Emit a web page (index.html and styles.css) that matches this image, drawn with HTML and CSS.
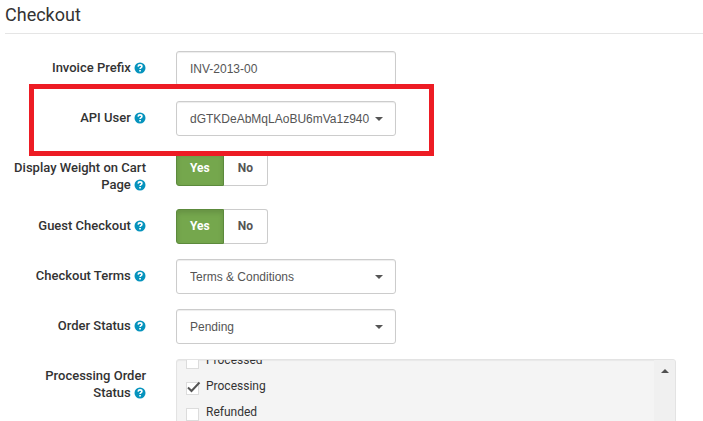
FILE: index.html
```html
<!DOCTYPE html>
<html lang="en">
<head>
  <meta charset="UTF-8">
  <meta name="viewport" content="width=device-width, initial-scale=1.0">
  <title>Checkout</title>
  <link rel="stylesheet" href="styles.css">
</head>
<body>
  <svg class="sprite" aria-hidden="true">
    <symbol id="help" viewBox="0 0 12 12">
      <circle cx="6" cy="6" r="5.5" fill="#0593bd"/>
      <path d="M4.1 4.6C4.2 3.4 5 2.9 6 2.9s1.9.6 1.9 1.6C7.9 5.700 6.100 5.700 6.100 7.100" fill="none" stroke="#fff" stroke-width="1.600"/>
      <path d="M5.200 7.900h1.700v1.500H5.200z" fill="#fff"/>
    </symbol>
  </svg>
  <form class="settings">
    <h1>Checkout</h1>

    <div class="form-group">
      <label class="control-label" for="invoice-prefix">Invoice Prefix <svg class="help"><use href="#help"/></svg></label>
      <input class="form-control" type="text" id="invoice-prefix" value="INV-2013-00">
    </div>

    <div class="form-group highlight">
      <label class="control-label" for="api-user">API User <svg class="help"><use href="#help"/></svg></label>
      <div class="select">
        <select class="form-control" id="api-user">
          <option>dGTKDeAbMqLAoBU6mVa1z940</option>
        </select>
      </div>
    </div>

    <div class="form-group" role="radiogroup" aria-labelledby="cart-weight">
      <span class="control-label" id="cart-weight">Display Weight on Cart Page <svg class="help"><use href="#help"/></svg></span>
      <div class="btn-group">
        <label class="btn"><input type="radio" name="cart-weight" value="1" checked>Yes</label>
        <label class="btn"><input type="radio" name="cart-weight" value="0">No</label>
      </div>
    </div>

    <div class="form-group" role="radiogroup" aria-labelledby="guest-checkout">
      <span class="control-label" id="guest-checkout">Guest Checkout <svg class="help"><use href="#help"/></svg></span>
      <div class="btn-group">
        <label class="btn"><input type="radio" name="guest-checkout" value="1" checked>Yes</label>
        <label class="btn"><input type="radio" name="guest-checkout" value="0">No</label>
      </div>
    </div>

    <div class="form-group">
      <label class="control-label" for="checkout-terms">Checkout Terms <svg class="help"><use href="#help"/></svg></label>
      <div class="select">
        <select class="form-control" id="checkout-terms">
          <option>Terms &amp; Conditions</option>
        </select>
      </div>
    </div>

    <div class="form-group">
      <label class="control-label" for="order-status">Order Status <svg class="help"><use href="#help"/></svg></label>
      <div class="select">
        <select class="form-control" id="order-status">
          <option>Pending</option>
        </select>
      </div>
    </div>

    <div class="form-group" role="group" aria-labelledby="processing-status">
      <span class="control-label" id="processing-status">Processing Order Status <svg class="help"><use href="#help"/></svg></span>
      <div class="well">
        <div class="checkbox-list">
          <label class="checkbox"><input type="checkbox">Processed</label>
          <label class="checkbox"><input type="checkbox" checked><svg class="tick" viewBox="0 0 14 12"><path d="M1 6.500L4.500 10L12.500 1.500" fill="none" stroke="#555" stroke-width="2"/></svg>Processing</label>
          <label class="checkbox"><input type="checkbox">Refunded</label>
        </div>
        <div class="scrollbar"></div>
      </div>
    </div>
  </form>
</body>
</html>
```
FILE: styles.css
```css
* {
  box-sizing: border-box;
}

html {
  overflow: hidden;
}

body {
  margin: 0;
  background: #fff;
  color: #333;
  font-family: Roboto, "Liberation Sans", sans-serif;
  font-size: 12px;
  line-height: 17px;
}

.sprite {
  display: none;
}

.settings {
  padding: 4px 0 0 5px;
}

h1 {
  margin: 0 0 17px;
  padding-bottom: 7px;
  border-bottom: 1px solid #e5e5e5;
  font-size: 18px;
  font-weight: 400;
  line-height: 22px;
}

.form-group {
  display: grid;
  grid-template-columns: 141px 1fr;
  column-gap: 30px;
  align-items: start;
  position: relative;
  margin-bottom: 15px;
}

.control-label {
  padding: 8px 0 1px;
  font-weight: 500;
  font-size: 13px;
  text-align: right;
}

.help {
  width: 12px;
  height: 12px;
  vertical-align: -2px;
}

.form-control {
  width: 220px;
  height: 35px;
  padding: 0 13px;
  border: 1px solid #ccc;
  border-radius: 3px;
  background: #fff;
  box-shadow: inset 0 1px 1px rgba(0, 0, 0, 0.075);
  color: #555;
  font-family: "Liberation Sans", Arial, sans-serif;
  font-size: 12px;
}

.select {
  position: relative;
  width: 220px;
  height: 35px;
}

.select select {
  appearance: none;
  padding-right: 25px;
}

.select::after {
  content: "";
  position: absolute;
  top: 16px;
  right: 13px;
  border: 4px solid transparent;
  border-top-color: #555;
  border-bottom: 0;
  pointer-events: none;
}

/* frame drawn over the neighbouring rows */
.highlight::after {
  content: "";
  box-sizing: border-box;
  position: absolute;
  z-index: 1;
  top: -17px;
  bottom: -20px;
  left: 24px;
  width: 405px;
  border: 5px solid #ed1c24;
  pointer-events: none;
}

.btn-group {
  display: flex;
}

.btn {
  position: relative;
  height: 35px;
  padding: 8px 14px;
  border: 1px solid #ccc;
  border-left: 0;
  border-radius: 0 3px 3px 0;
  color: #555;
  font-weight: 700;
  cursor: pointer;
}

.btn:first-child {
  border-left: 1px solid #ccc;
  border-radius: 3px 0 0 3px;
}

.btn:has(input:checked) {
  padding: 8px 13px;
  border: 1px solid #5c8a3c;
  background: #75a74d;
  box-shadow: inset 0 3px 5px rgba(0, 0, 0, 0.125);
  color: #fff;
}

.btn input {
  position: absolute;
  opacity: 0;
  pointer-events: none;
}

.well {
  display: flex;
  justify-content: space-between;
  max-width: 500px;
  height: 150px;
  overflow: hidden;
  border: 1px solid #e3e3e3;
  border-radius: 3px;
  background: #f4f4f4;
  box-shadow: inset 0 1px 1px rgba(0, 0, 0, 0.05);
}

/* list is scrolled by half a row */
.checkbox-list {
  margin-top: -13px;
  padding-left: 9px;
}

.checkbox {
  display: flex;
  align-items: center;
  gap: 7px;
  position: relative;
  height: 26px;
}

.checkbox input {
  appearance: none;
  width: 13px;
  height: 13px;
  margin: 4px 0 0;
  border: 1px solid #dcdcdc;
  background: #fff;
}

.tick {
  position: absolute;
  top: 8px;
  left: 1px;
  width: 14px;
  height: 12px;
}

.scrollbar {
  width: 21px;
  background: #f0f0f0;
}

.scrollbar::before {
  content: "";
  display: block;
  width: 0;
  margin: 9px 7px;
  border: 4px solid transparent;
  border-top: 0;
  border-bottom-color: #505050;
}
```
